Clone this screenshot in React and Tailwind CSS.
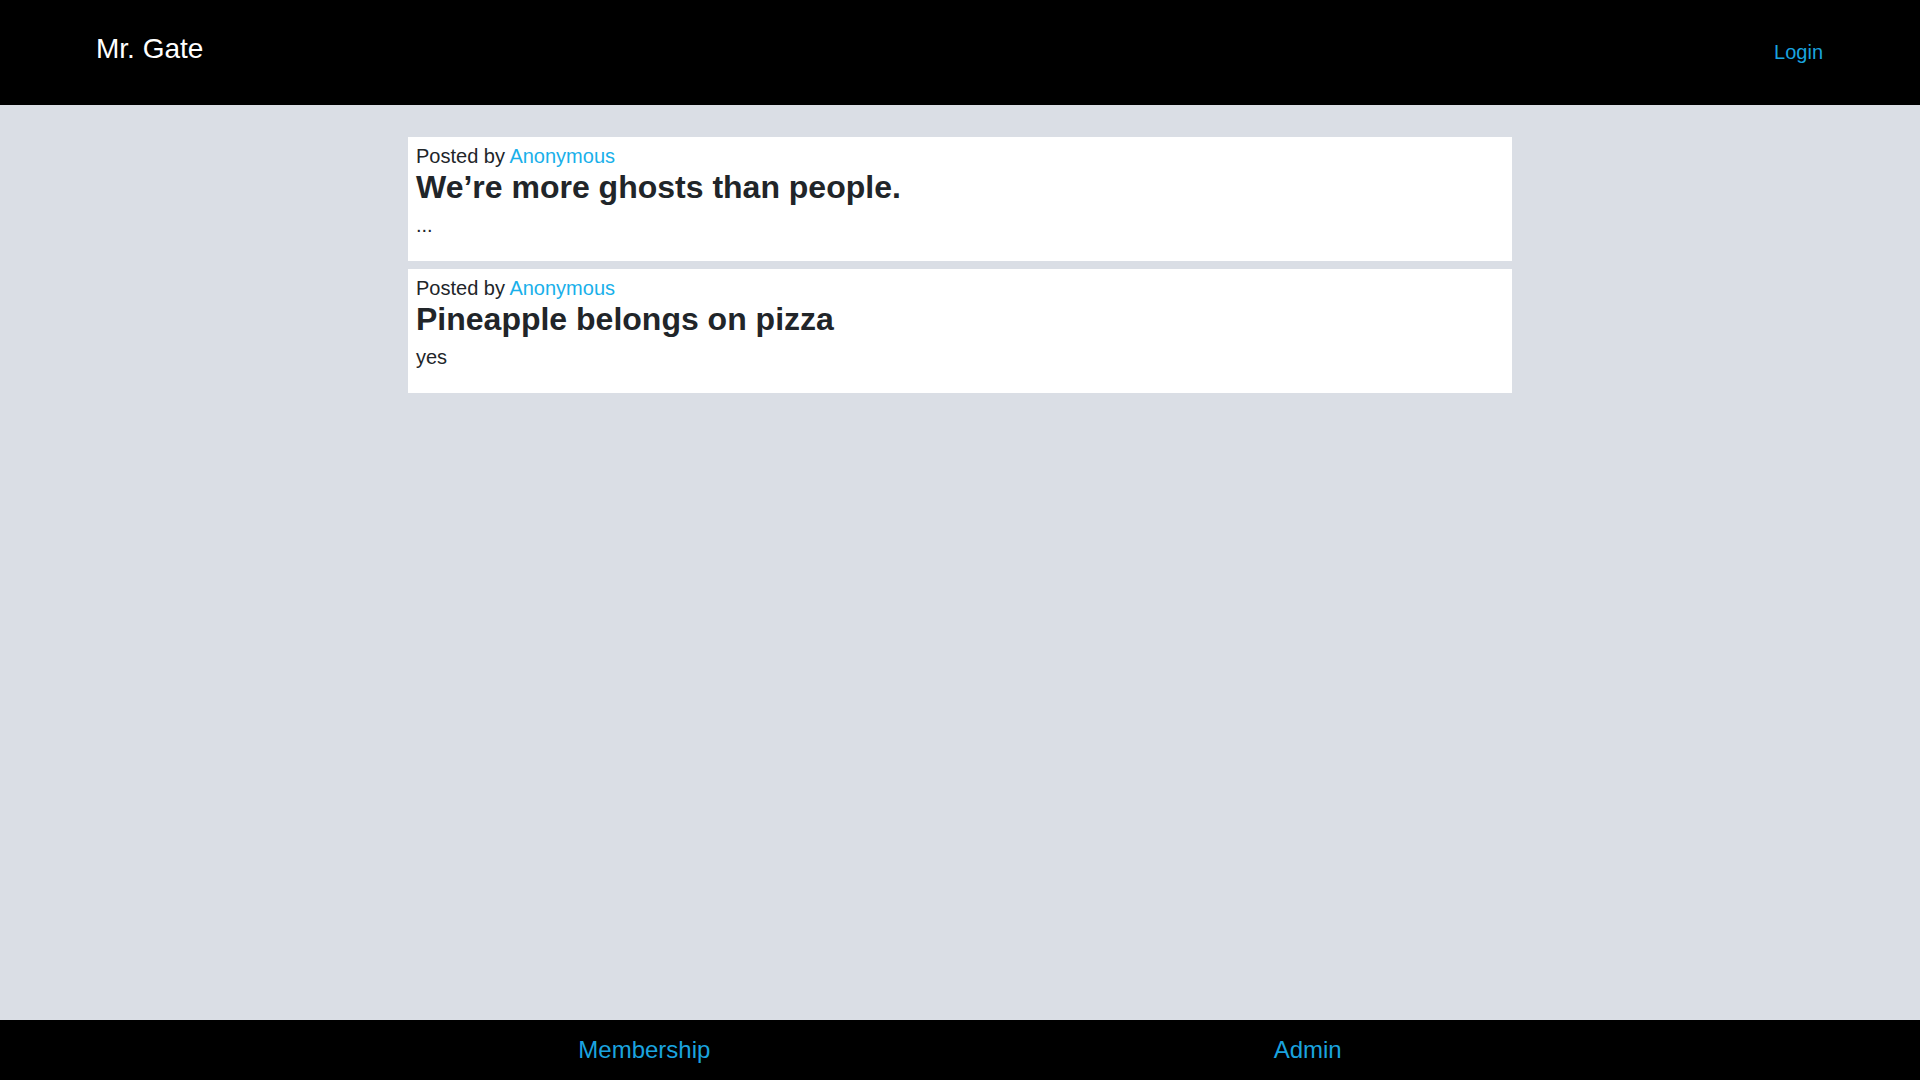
const posts = [
  { id: 1, author: "Anonymous", title: "We’re more ghosts than people.", body: "..." },
  { id: 2, author: "Anonymous", title: "Pineapple belongs on pizza", body: "yes" },
];

export default function App() {
  return (
    <div
      className="flex min-h-screen flex-col bg-[#dadee5] text-[#212529]"
      style={{ fontFamily: '"Liberation Sans", Arial, sans-serif' }}
    >
      <header className="flex h-[105px] items-start justify-between bg-black pl-[96px] pr-[97px]">
        <a className="mt-[32px] text-[28px] leading-[34px] text-white">Mr. Gate</a>
        <a className="mt-[40px] text-[20px] leading-[24px] text-[#1aa3df]">Login</a>
      </header>

      {/* Posts */}
      <main className="flex flex-1 flex-col items-center gap-2 pt-8">
        {posts.map((p) => (
          <div key={p.id} className="w-[1104px] bg-white px-2 pt-[7px] pb-6">
            <p className="text-[20px] leading-[24px]">
              Posted by <span className="text-[#19b0ea]">{p.author}</span>
            </p>
            <h2 className="mb-[7px] text-[32px] font-bold leading-[38px]">{p.title}</h2>
            <p className="text-[20px] leading-[24px]">{p.body}</p>
          </div>
        ))}
      </main>

      <footer className="flex h-[60px] items-center justify-evenly bg-black px-[15px]">
        <a className="text-[24px] leading-[28px] text-[#1aa3df]">Membership</a>
        <a className="text-[24px] leading-[28px] text-[#1aa3df]">Admin</a>
      </footer>
    </div>
  );
}
